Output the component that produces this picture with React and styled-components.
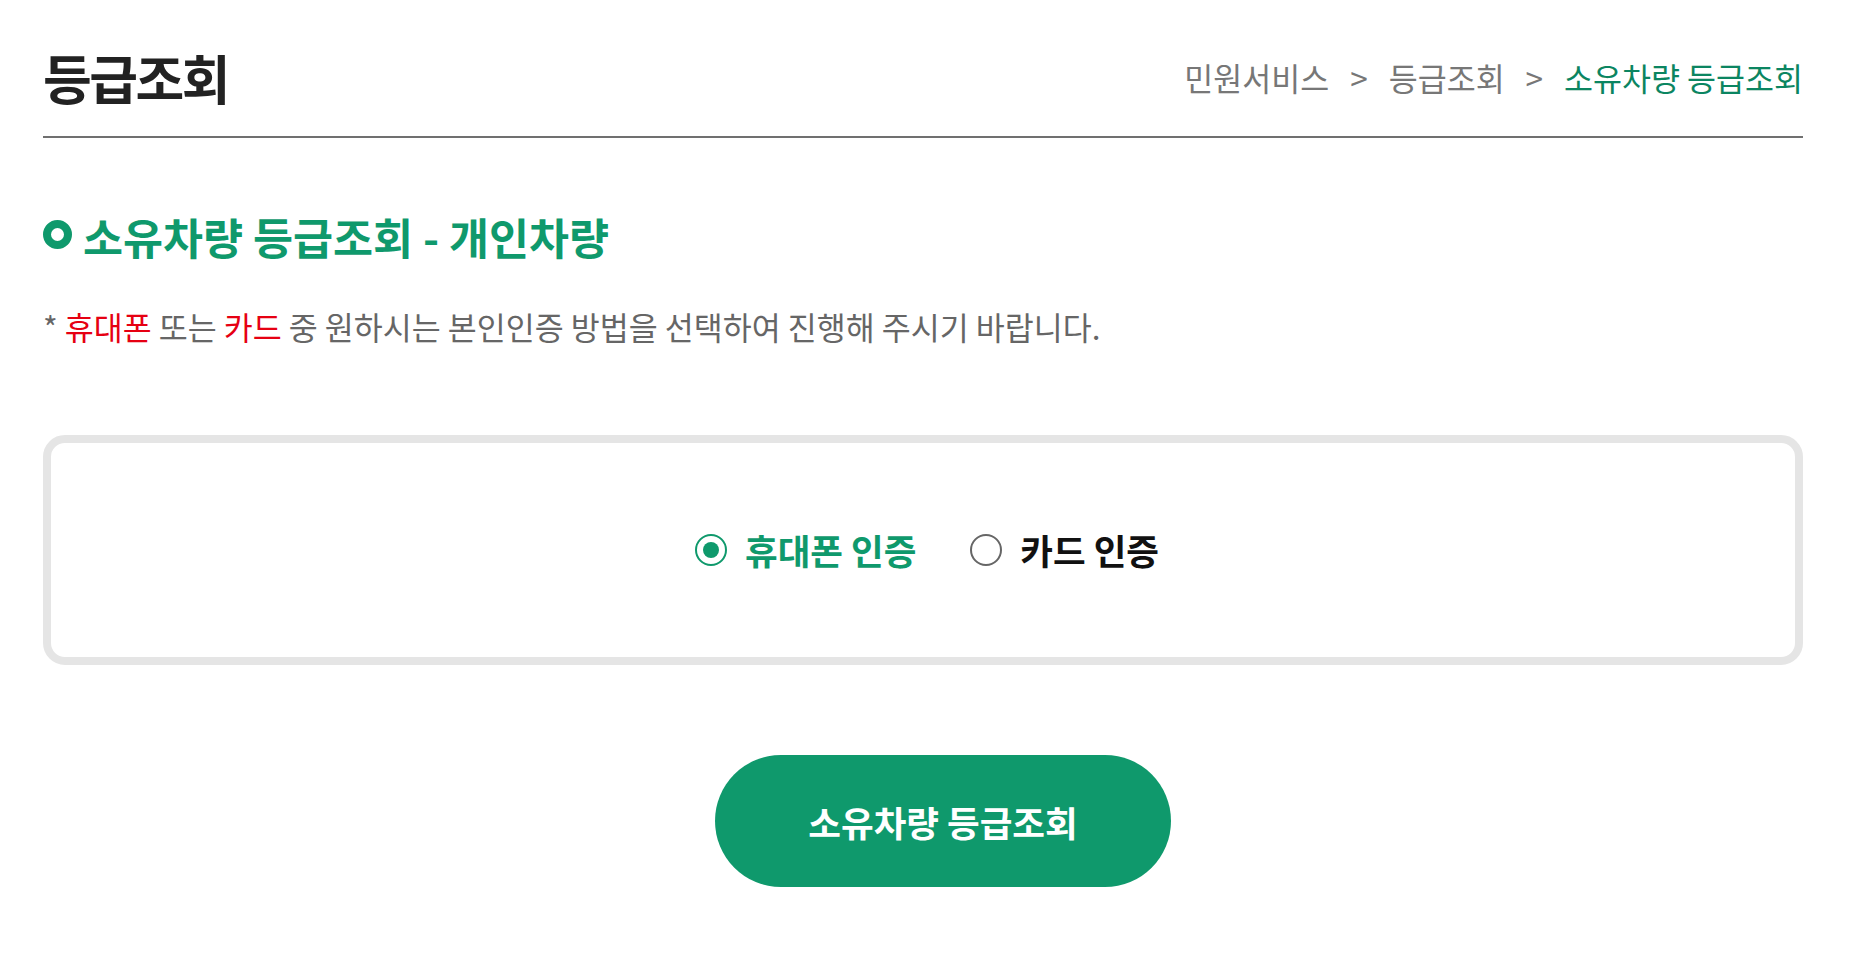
import React, { useState } from "react";
import styled, { createGlobalStyle } from "styled-components";

const GREEN = "#0f996c";

const GlobalStyle = createGlobalStyle`
  body {
    margin: 0;
    background: #fff;
    font-family: "Noto Sans CJK KR", "Noto Sans", sans-serif;
  }
`;

const methods = [
  { id: "phone", label: "휴대폰 인증" },
  { id: "card", label: "카드 인증" },
];

const App = () => {
  const [method, setMethod] = useState("phone");

  return (
    <>
      <GlobalStyle />
      <Page>
        <Header>
          <Title>등급조회</Title>
          <Crumbs>
            <Crumb>민원서비스</Crumb>
            <Sep>&gt;</Sep>
            <Crumb>등급조회</Crumb>
            <Sep>&gt;</Sep>
            <Crumb current>소유차량 등급조회</Crumb>
          </Crumbs>
        </Header>

        <SectionTitle>
          <Bullet />
          소유차량 등급조회 - 개인차량
        </SectionTitle>

        <Notice>
          * <Red>휴대폰</Red> 또는 <Red>카드</Red> 중 원하시는 본인인증 방법을
          선택하여 진행해 주시기 바랍니다.
        </Notice>

        <ChoiceBox>
          {methods.map((m) => (
            <Choice key={m.id} onClick={() => setMethod(m.id)}>
              <Radio checked={method === m.id} />
              <ChoiceLabel checked={method === m.id}>{m.label}</ChoiceLabel>
            </Choice>
          ))}
        </ChoiceBox>

        <ButtonRow>
          <SubmitButton>소유차량 등급조회</SubmitButton>
        </ButtonRow>
      </Page>
    </>
  );
};

export default App;

const Page = styled.div`
  width: 1760px;
  margin-left: 43px;
  padding-bottom: 60px;
`;

const Header = styled.div`
  display: flex;
  align-items: center;
  justify-content: space-between;
  height: 138px;
  padding-top: 18px;
  box-sizing: border-box;
  border-bottom: 2px solid #707070;
`;

const Title = styled.h1`
  margin: 0;
  font-size: 53px;
  line-height: 53px;
  font-weight: 700;
  letter-spacing: -2.5px;
  color: #222;
`;

const Crumbs = styled.div`
  display: flex;
  align-items: center;
  font-size: 31.5px;
  line-height: 32px;
  color: #777;
`;

const Crumb = styled.span`
  color: ${(p) => (p.current ? "#0b8561" : "#777")};
`;

const Sep = styled.span`
  margin: 0 21px;
  color: #777;
`;

const SectionTitle = styled.h2`
  display: flex;
  align-items: center;
  margin: 77px 0 0;
  font-size: 43.5px;
  line-height: 44px;
  font-weight: 700;
  color: ${GREEN};
`;

const Bullet = styled.span`
  width: 29px;
  height: 29px;
  box-sizing: border-box;
  border: 8.5px solid ${GREEN};
  border-radius: 50%;
  margin: 0 11px 6px 0;
`;

const Notice = styled.p`
  margin: 51px 0 0;
  font-size: 31.5px;
  line-height: 32px;
  color: #666;
`;

const Red = styled.span`
  color: #e60012;
`;

const ChoiceBox = styled.div`
  display: flex;
  align-items: center;
  justify-content: center;
  gap: 54px;
  height: 230px;
  margin-top: 93px;
  padding-left: 8px;
  box-sizing: border-box;
  border: 8px solid #e5e5e5;
  border-radius: 22px;
`;

const Choice = styled.label`
  display: flex;
  align-items: center;
  gap: 18px;
  cursor: pointer;
`;

const Radio = styled.span`
  display: flex;
  align-items: center;
  justify-content: center;
  width: 32px;
  height: 32px;
  box-sizing: border-box;
  border: 2px solid ${(p) => (p.checked ? GREEN : "#666")};
  border-radius: 50%;

  &::after {
    content: "";
    display: ${(p) => (p.checked ? "block" : "none")};
    width: 16px;
    height: 16px;
    border-radius: 50%;
    background: ${GREEN};
  }
`;

const ChoiceLabel = styled.span`
  font-size: 35.5px;
  line-height: 36px;
  font-weight: 700;
  color: ${(p) => (p.checked ? GREEN : "#111")};
`;

const ButtonRow = styled.div`
  display: flex;
  justify-content: center;
  padding-left: 40px;
  margin-top: 90px;
`;

const SubmitButton = styled.button`
  width: 456px;
  height: 132px;
  border: none;
  border-radius: 66px;
  background: ${GREEN};
  color: #fff;
  font-family: inherit;
  font-size: 35.5px;
  font-weight: 700;
  cursor: pointer;
`;
